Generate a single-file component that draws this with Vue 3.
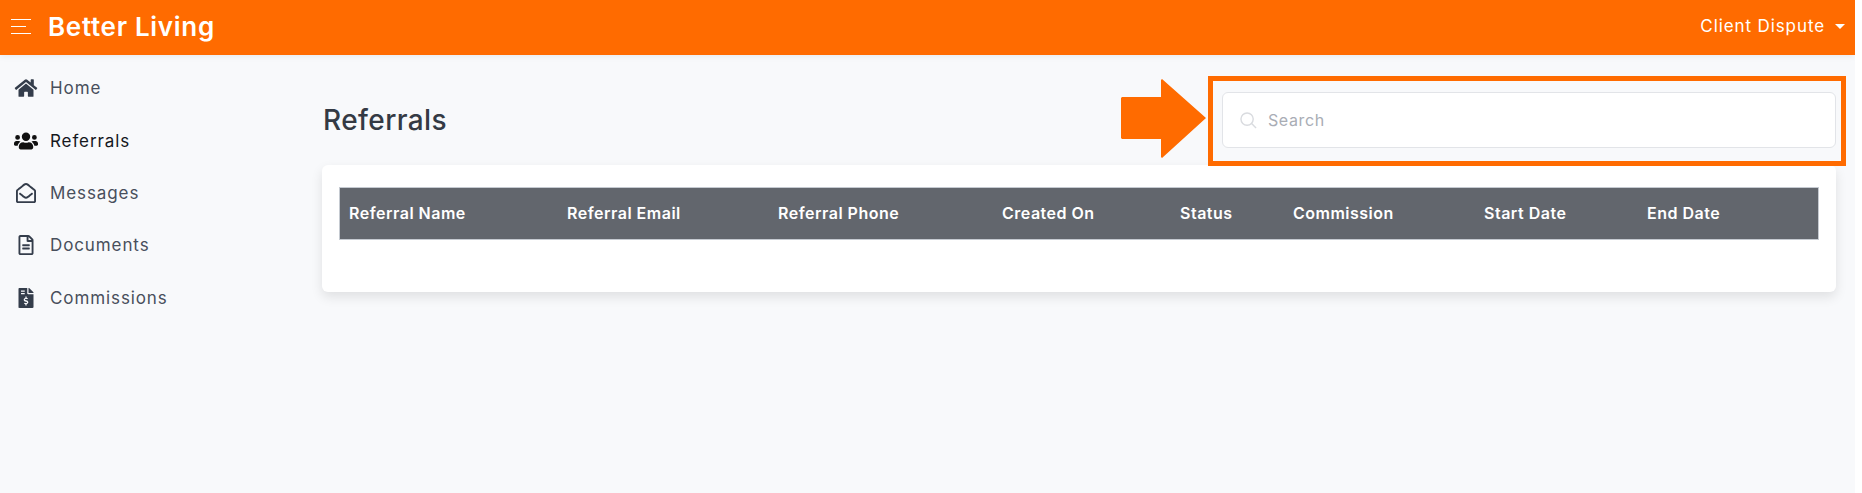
<template>
  <div class="page">
    <header class="topbar">
      <div class="brand">
        <span class="burger"><i></i><i class="short"></i><i></i></span>
        <h1>Better Living</h1>
      </div>
      <div class="account">
        <span>Client Dispute</span>
        <span class="caret"></span>
      </div>
    </header>

    <div class="body">
      <nav class="sidebar">
        <a v-for="item in navItems" :key="item.label" class="nav-link" :class="{ active: item.active }">
          <svg class="nav-icon" :viewBox="item.box" aria-hidden="true"><path :d="item.icon" /></svg>
          <span>{{ item.label }}</span>
        </a>
      </nav>

      <main class="content">
        <div class="title-row">
          <h2>Referrals</h2>
          <div class="search-area">
            <svg class="arrow" viewBox="0 0 85 79" aria-hidden="true">
              <path d="M1 18h39V1l1 -1L85 39L41 79l-1 -1V60H1l-1 -1V19z" />
            </svg>
            <div class="highlight">
              <div class="search">
                <svg class="search-icon" viewBox="0 0 18 18" aria-hidden="true">
                  <circle cx="7.5" cy="7.5" r="6.5" />
                  <path d="M12.3 12.3L17 17" />
                </svg>
                <span>Search</span>
              </div>
            </div>
          </div>
        </div>

        <section class="card">
          <div class="table-head">
            <div v-for="col in columns" :key="col.label" class="th" :style="{ width: `${col.width}px` }">{{ col.label }}</div>
          </div>
        </section>
      </main>
    </div>
  </div>
</template>

<script setup>
const navItems = [
  {
    label: 'Home',
    box: '0 0 576 512',
    icon: 'M280.4 148.3L96 300.1V464a16 16 0 0 0 16 16l112.1-.3a16 16 0 0 0 15.9-16V368a16 16 0 0 1 16-16h64a16 16 0 0 1 16 16v95.6a16 16 0 0 0 16 16.1L464 480a16 16 0 0 0 16-16V300L295.7 148.3a12.2 12.2 0 0 0-15.3 0zM571.6 251.5L488 182.6V44.1a12 12 0 0 0-12-12h-56a12 12 0 0 0-12 12v72.6L318.5 43a48 48 0 0 0-61 0L4.3 251.5a12 12 0 0 0-1.6 16.9l25.5 31A12 12 0 0 0 45.2 301l235.2-193.7a12.2 12.2 0 0 1 15.3 0L530.9 301a12 12 0 0 0 16.9-1.6l25.5-31a12 12 0 0 0-1.7-16.9z'
  },
  {
    label: 'Referrals',
    active: true,
    box: '0 0 640 512',
    icon: 'M96 224a64 64 0 1 0 0-128 64 64 0 0 0 0 128zm448 0a64 64 0 1 0 0-128 64 64 0 0 0 0 128zm32 32h-64c-17.6 0-33.5 7.1-45.1 18.6 40.3 22.1 68.9 62 75.1 109.4h66c17.7 0 32-14.3 32-32v-32c0-35.3-28.7-64-64-64zm-256 0a112 112 0 1 0 0-224 112 112 0 0 0 0 224zm76.8 32h-8.3c-20.8 10-43.9 16-68.5 16s-47.6-6-68.5-16h-8.3C179.6 288 128 339.6 128 403.2V432c0 26.5 21.5 48 48 48h288c26.5 0 48-21.5 48-48v-28.8c0-63.6-51.6-115.2-115.2-115.2zm-223.7-13.4C161.5 263.1 145.6 256 128 256H64c-35.3 0-64 28.7-64 64v32c0 17.7 14.3 32 32 32h65.9c6.3-47.4 34.9-87.3 75.2-109.4z'
  },
  {
    label: 'Messages',
    box: '0 0 512 512',
    icon: 'M494.586 164.516c-4.697-3.883-111.723-89.95-135.251-108.657C337.231 38.191 299.437 0 256 0c-43.205 0-80.636 37.717-103.335 55.859-24.463 19.45-131.07 105.195-135.15 108.549A48.004 48.004 0 0 0 0 201.485V464c0 26.51 21.49 48 48 48h416c26.51 0 48-21.49 48-48V201.509a48 48 0 0 0-17.414-36.993zM464 458a6 6 0 0 1-6 6H54a6 6 0 0 1-6-6V204.347c0-1.813.816-3.526 2.226-4.665 15.87-12.814 108.793-87.554 132.364-106.293C200.755 78.88 232.398 48 256 48c23.693 0 55.857 31.369 73.41 45.389 23.573 18.741 116.503 93.493 132.366 106.316a5.99 5.99 0 0 1 2.224 4.663V458zm-31.991-187.704c4.249 5.159 3.465 12.795-1.745 16.981-28.975 23.283-59.274 47.597-70.929 56.863C336.636 362.283 299.205 400 256 400c-43.452 0-81.287-38.237-103.335-55.86-11.279-8.967-41.744-33.413-70.927-56.865-5.21-4.187-5.993-11.822-1.745-16.981l15.258-18.528c4.178-5.073 11.657-5.843 16.779-1.726 28.618 23.001 58.566 47.035 70.56 56.571C200.143 320.631 232.307 352 256 352c23.602 0 55.246-30.88 73.41-45.389 11.994-9.535 41.944-33.57 70.563-56.568 5.122-4.116 12.601-3.346 16.778 1.727l15.258 18.526z'
  },
  {
    label: 'Documents',
    box: '0 0 384 512',
    icon: 'M288 248v28c0 6.6-5.4 12-12 12H108c-6.6 0-12-5.4-12-12v-28c0-6.6 5.4-12 12-12h168c6.6 0 12 5.4 12 12zm-12 72H108c-6.6 0-12 5.4-12 12v28c0 6.6 5.4 12 12 12h168c6.6 0 12-5.4 12-12v-28c0-6.6-5.4-12-12-12zm108-188.1V464c0 26.5-21.5 48-48 48H48c-26.5 0-48-21.5-48-48V48C0 21.5 21.5 0 48 0h204.1C264.8 0 277 5.1 286 14.1L369.9 98c9 8.9 14.1 21.2 14.1 33.9zm-128-80V128h76.1L256 51.9zM336 464V176H232c-13.3 0-24-10.7-24-24V48H48v416h288z'
  },
  {
    label: 'Commissions',
    box: '0 0 384 512',
    icon: 'M377 105L279.1 7c-4.5-4.5-10.6-7-17-7H256v128h128v-6.1c0-6.3-2.5-12.4-7-16.9zm-153 31V0H24C10.7 0 0 10.7 0 24v464c0 13.3 10.7 24 24 24h336c13.3 0 24-10.7 24-24V160H248c-13.2 0-24-10.8-24-24zM64 72c0-4.4 3.6-8 8-8h80c4.4 0 8 3.6 8 8v16c0 4.4-3.6 8-8 8H72c-4.4 0-8-3.6-8-8V72zm0 80v-16c0-4.4 3.6-8 8-8h80c4.4 0 8 3.6 8 8v16c0 4.4-3.6 8-8 8H72c-4.4 0-8-3.6-8-8zm144 263.9V440c0 4.4-3.6 8-8 8h-16c-4.4 0-8-3.6-8-8v-24.3c-11.3-.6-22.3-4.5-31.4-11.4-3.9-2.9-4.1-8.8-.6-12.2l11.8-11.2c2.8-2.6 6.9-2.8 10.1-.7 3.9 2.4 8.3 3.7 12.8 3.7h28.1c6.5 0 11.8-5.9 11.8-13.2 0-6-3.6-11.2-8.8-12.7l-45-13.5c-18.6-5.6-31.6-23.4-31.6-43.4 0-24.5 19-44.4 42.7-45V224c0-4.4 3.6-8 8-8h16c4.4 0 8 3.6 8 8v24.3c11.3.6 22.3 4.5 31.4 11.4 3.9 2.9 4.1 8.8.6 12.2l-11.8 11.2c-2.8 2.6-6.9 2.8-10.1.7-3.9-2.5-8.3-3.7-12.8-3.7h-28.1c-6.5 0-11.8 5.9-11.8 13.2 0 6 3.6 11.2 8.8 12.7l45 13.5c18.6 5.6 31.6 23.4 31.6 43.4 0 24.6-19 44.4-42.7 45z'
  }
];

const columns = [
  { label: 'Referral Name', width: 218 },
  { label: 'Referral Email', width: 211 },
  { label: 'Referral Phone', width: 224 },
  { label: 'Created On', width: 178 },
  { label: 'Status', width: 113 },
  { label: 'Commission', width: 191 },
  { label: 'Start Date', width: 163 },
  { label: 'End Date', width: 180 }
];
</script>

<style scoped>
.page {
  width: 1855px;
  height: 493px;
  overflow: hidden;
  background: #f8f9fb;
  font-family: Inter, "Noto Sans", sans-serif;
  color: #484f5c;
}

.topbar {
  height: 55px;
  box-sizing: border-box;
  background: #ff6b00;
  color: #fff;
  display: flex;
  align-items: center;
  justify-content: space-between;
  padding: 0 10px 3px 11px;
  box-shadow: 0 2px 6px rgba(0, 0, 0, 0.06);
  position: relative;
}

.brand {
  display: flex;
  align-items: center;
  gap: 17px;
}

.burger {
  display: flex;
  flex-direction: column;
  gap: 6px;
  width: 20px;
}

.burger i {
  display: block;
  height: 1px;
  background: #fff;
}

.burger i.short {
  width: 15px;
}

h1 {
  margin: 0;
  font-size: 26px;
  font-weight: 600;
  letter-spacing: 0.7px;
}

.account {
  display: flex;
  align-items: center;
  gap: 10px;
  font-size: 17px;
  letter-spacing: 0.9px;
}

.caret {
  width: 0;
  height: 0;
  border-left: 5.5px solid transparent;
  border-right: 5.5px solid transparent;
  border-top: 5.5px solid #fff;
}

.body {
  display: flex;
}

.sidebar {
  width: 322px;
  padding-top: 7px;
  display: flex;
  flex-direction: column;
  flex-shrink: 0;
}

.nav-link {
  height: 52.4px;
  display: flex;
  align-items: center;
  gap: 12px;
  padding-left: 14px;
  font-size: 17px;
  letter-spacing: 0.9px;
  color: #484f5c;
}

.nav-link.active {
  color: #15181d;
}

.nav-icon {
  width: 24px;
  height: 20px;
  fill: #343d4b;
}

.nav-link.active .nav-icon {
  fill: #111;
}

.content {
  flex: 1;
  padding-right: 19px;
}

.title-row {
  height: 110px;
  display: flex;
  align-items: center;
  justify-content: space-between;
}

h2 {
  margin: 20px 0 0;
  padding-left: 1px;
  font-size: 28px;
  font-weight: 500;
  letter-spacing: 0.4px;
  color: #343a44;
}

.search-area {
  display: flex;
  align-items: flex-start;
  gap: 2px;
  margin-right: -10px;
  margin-top: 22px;
}

.arrow {
  width: 85px;
  height: 79px;
  margin-top: 3px;
  fill: #ff6b00;
}

.highlight {
  width: 638px;
  height: 90px;
  box-sizing: border-box;
  border: 5px solid #ff6b00;
  padding: 11px 5px 0 9px;
}

.search {
  height: 56px;
  box-sizing: border-box;
  background: #fff;
  border: 1px solid #e2e4e8;
  border-radius: 6px;
  display: flex;
  align-items: center;
  gap: 11px;
  padding-left: 17px;
  font-size: 16px;
  letter-spacing: 0.6px;
  color: #a9adb5;
}

.search-icon {
  width: 17px;
  height: 17px;
  fill: none;
  stroke: #d9dbdf;
  stroke-width: 1.5;
}

.card {
  height: 127px;
  box-sizing: border-box;
  background: #fff;
  border-radius: 6px;
  padding: 22px 17px 0;
  box-shadow: 0 5px 12px rgba(0, 0, 0, 0.1);
}

.table-head {
  height: 53px;
  box-sizing: border-box;
  background: #62666d;
  border: 1px solid #c5cad1;
  padding-bottom: 1px;
  display: flex;
  align-items: center;
}

.th {
  box-sizing: border-box;
  padding-left: 9px;
  color: #fff;
  font-size: 16px;
  font-weight: 600;
  letter-spacing: 0.5px;
}
</style>
